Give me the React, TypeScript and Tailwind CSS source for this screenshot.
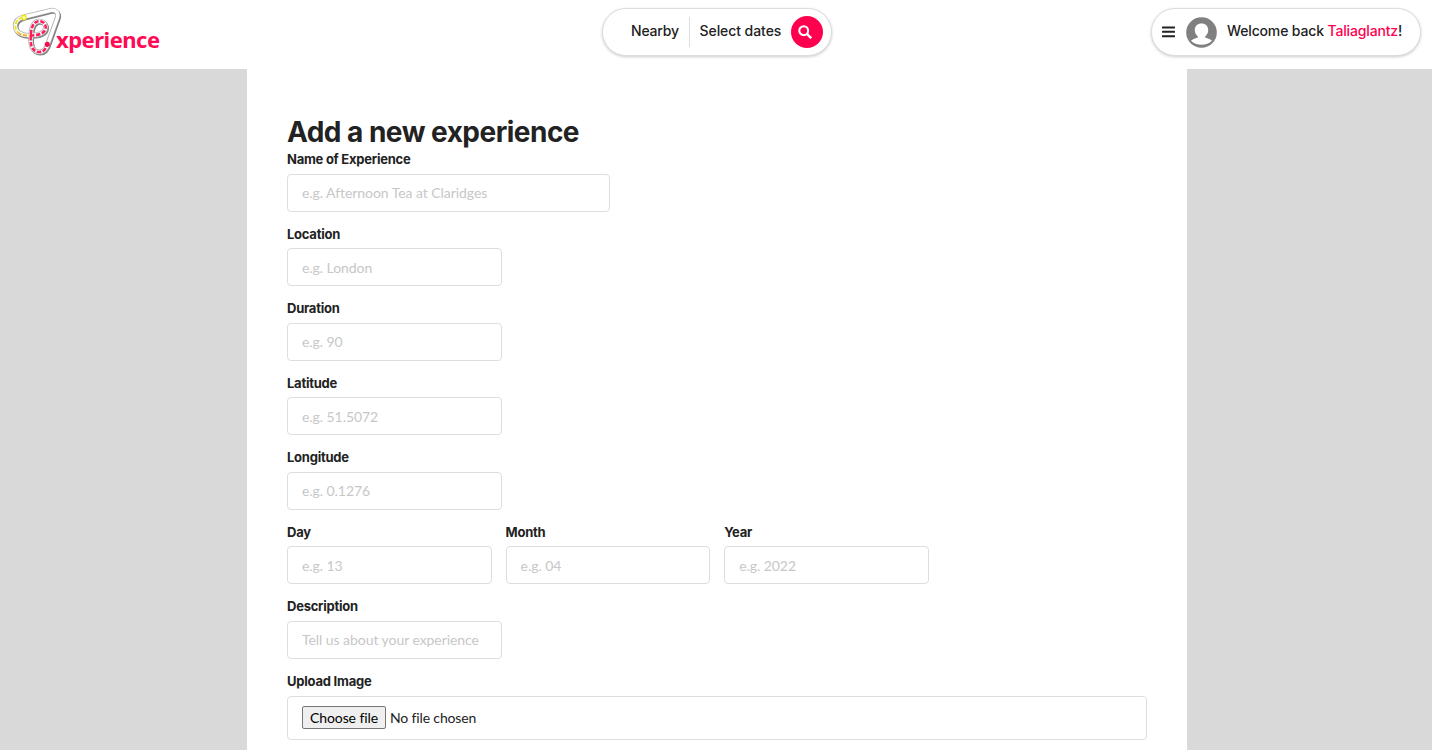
import React from "react";

function Logo() {
  const track =
    "M24 17 L51 10.4 C56 9.4 59 13 57.3 18 L48.3 43 C46.5 49.5 43.5 52 39.5 52 C33.5 52 30.7 47 30.7 40 C30.7 29 32.5 21.3 39.3 21.3 C44 21.3 46.5 25 45.5 28.8 C44 34.3 37 35.4 30 35.4 C22 35.8 15.5 32.5 15.3 26 C15.3 21 19 18.2 24 17 Z";
  return (
    <svg className="block h-[60px] w-[62px] shrink-0" viewBox="0 0 62 60" fill="none" strokeLinejoin="round" strokeLinecap="round">
      <path d={track} transform="translate(.9 1.1)" stroke="#858585" strokeWidth="4.8" />
      <path d={track} transform="translate(-.2 -.2)" stroke="#b4b4b4" strokeWidth="4.7" />
      <path d={track} stroke="#fff" strokeWidth="3.4" />
      <g strokeWidth="1.9" strokeLinecap="butt">
        <path d="M23 17.4 C18 18.7 15.3 22 15.3 26 C15.4 28.5 16 30.5 18 32.4" stroke="#efe420" strokeDasharray="4.4 1.6" />
        <path d="M18 32.4 C21 35.3 25 35.7 30 35.4" stroke="#f8b526" strokeDasharray="4.2 1.5" />
        <path d="M30 35.4 C37 35.4 44 34.3 45.5 28.8 C46.5 25 44 21.3 39.3 21.3 C32.5 21.3 30.7 29 30.7 40 C30.7 47 33.5 52 39.5 52 C43 52 45.5 50 47 45" stroke="#ff1c5c" strokeWidth="2.5" strokeDasharray="4.4 1.6" />
      </g>
      <circle cx="24" cy="17.4" r="2" fill="#fff" stroke="#eeea20" strokeWidth="1.6" />
      <circle cx="47.3" cy="44.3" r="2.5" fill="#f5094f" />
    </svg>
  );
}

function Field({ label, placeholder, width }: { label: string; placeholder: string; width: string }) {
  return (
    <div className={`mb-[14px] ${width}`}>
      <label className="mb-[5px] block h-[17.57px] whitespace-nowrap font-['Inter',sans-serif] text-[13px] leading-[17.57px] font-bold tracking-[-0.25px]">{label}</label>
      <input
        className="block h-[37.95px] w-full rounded-[4px] border border-[#dededf] bg-white px-[14px] text-[14px] leading-[17px] tracking-[-0.06px] outline-none placeholder:text-[#c7c7c7]"
        placeholder={placeholder}
      />
    </div>
  );
}

export default function App() {
  return (
    <div className="h-[750px] overflow-hidden bg-[#d9d9d9] font-['Lato',sans-serif] text-[#222]">
      <header className="flex h-[69px] items-start justify-between bg-white font-['Inter',sans-serif] text-[14px] font-medium">
        <div className="flex w-[602px]">
          <Logo />
          <span className="-ml-[6px] mt-[23px] font-['Noto_Sans',sans-serif] text-[22px] leading-[32px] font-bold tracking-[-0.5px] text-[#ff0a54]">xperience</span>
        </div>
        <div className="mt-2 flex h-12 w-[230px] shrink-0 items-center rounded-full border border-[#dddddd] bg-white pl-7 shadow-[0_1px_3px_rgba(0,0,0,0.2)]">
          <span className="w-[58px] whitespace-nowrap pb-[3px] tracking-[-0.2px]">Nearby</span>
          <span className="h-[30px] w-px bg-[#dddddd]" />
          <span className="ml-[9.5px] w-[91.5px] whitespace-nowrap pb-[3px] tracking-[-0.07px]">Select dates</span>
          <span className="flex size-8 items-center justify-center rounded-full bg-[#ff004f]">
            <svg className="mr-[4px] size-[14px]" viewBox="0 0 14 14" fill="none" stroke="white" strokeWidth="2.1">
              <circle cx="5.7" cy="5.7" r="4.4" />
              <path d="M8.9 8.9 L13.2 13.2" strokeWidth="2.5" />
            </svg>
          </span>
        </div>
        <div className="flex w-[600px] justify-end pr-[11px] pt-2">
          <div className="flex h-12 w-[270px] items-center rounded-full border border-[#dddddd] bg-white pl-[10px] shadow-[0_1px_3px_rgba(0,0,0,0.2)]">
            <svg className="h-3 w-[13px]" viewBox="0 0 13 12" fill="#222">
              <rect y="0.4" width="13" height="2" rx=".4" />
              <rect y="4.8" width="13" height="2" rx=".4" />
              <rect y="9.2" width="13" height="2" rx=".4" />
            </svg>
            <svg className="ml-[10.5px] size-[31px]" viewBox="0 0 31 31">
              <circle cx="15.5" cy="15.5" r="15.3" fill="#808080" />
              <path d="M15.5 6.5 C11.5 6.5 8.8 9.2 8.8 13.2 C8.8 16 10.2 18 11.8 19.2 V20.6 C9 21.4 6.4 22.4 5 23.8 C10 29.2 21 29.2 26 23.8 C24.6 22.4 22 21.4 19.2 20.6 V19.2 C20.8 18 22.2 16 22.2 13.2 C22.2 9.2 19.5 6.5 15.5 6.5 Z" fill="white" />
            </svg>
            <span className="ml-[10.5px] whitespace-nowrap pb-[3px] tracking-[-0.15px]">
              Welcome back <span className="text-[#ff004f]">Taliaglantz</span>!
            </span>
          </div>
        </div>
      </header>
      <main className="ml-[247px] h-[681px] w-[940px] bg-white px-10 pt-[45px]">
        <h1 className="h-[37px] whitespace-nowrap font-['Inter',sans-serif] text-[28px] leading-[37px] font-bold tracking-[-0.52px]">Add a new experience</h1>
        <form>
          <Field label="Name of Experience" placeholder="e.g. Afternoon Tea at Claridges" width="w-[323px]" />
          <Field label="Location" placeholder="e.g. London" width="w-[215px]" />
          <Field label="Duration" placeholder="e.g. 90" width="w-[215px]" />
          <Field label="Latitude" placeholder="e.g. 51.5072" width="w-[215px]" />
          <Field label="Longitude" placeholder="e.g. 0.1276" width="w-[215px]" />
          <div className="flex gap-[13.8px]">
            <Field label="Day" placeholder="e.g. 13" width="w-[204.8px]" />
            <Field label="Month" placeholder="e.g. 04" width="w-[204.8px]" />
            <Field label="Year" placeholder="e.g. 2022" width="w-[204.8px]" />
          </div>
          <Field label="Description" placeholder="Tell us about your experience" width="w-[215px]" />
          <div>
            <label className="mb-[5.6px] block h-[17.57px] font-['Inter',sans-serif] text-[13px] leading-[17.57px] font-bold tracking-[-0.22px]">Upload Image</label>
            <div className="flex h-11 items-center rounded-[4px] border border-[#dededf] px-[14px] text-[14px] leading-[17px] tracking-[-0.15px]">
              <button type="button" className="mb-px h-[23px] w-[84px] whitespace-nowrap rounded-[2px] border border-[#767676] bg-[#efefef] text-center tracking-[-0.1px] text-black">Choose file</button>
              <span className="mb-px ml-1">No file chosen</span>
            </div>
          </div>
        </form>
      </main>
    </div>
  );
}
